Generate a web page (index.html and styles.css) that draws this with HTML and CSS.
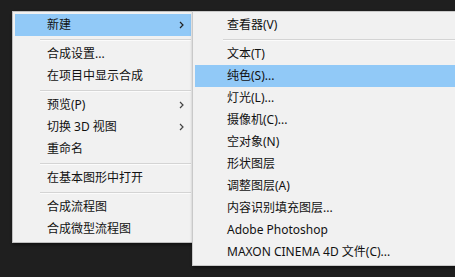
FILE: index.html
```html
<!DOCTYPE html>
<html lang="zh-CN">
<head>
<meta charset="utf-8">
<link rel="stylesheet" href="styles.css">
</head>
<body>
<div class="stage">
  <div class="menu menu-main">
    <div class="item active"><span class="label">新建</span><svg class="chev" width="5" height="8" viewBox="0 0 5 8"><path d="M1 1 L4 4 L1 7" fill="none" stroke="#222" stroke-width="1.2"/></svg></div>
    <div class="sep"></div>
    <div class="item"><span class="label">合成设置...</span></div>
    <div class="item"><span class="label">在项目中显示合成</span></div>
    <div class="sep"></div>
    <div class="item"><span class="label">预览(P)</span><svg class="chev" width="5" height="8" viewBox="0 0 5 8"><path d="M1 1 L4 4 L1 7" fill="none" stroke="#444" stroke-width="1.2"/></svg></div>
    <div class="item"><span class="label">切换 3D 视图</span><svg class="chev" width="5" height="8" viewBox="0 0 5 8"><path d="M1 1 L4 4 L1 7" fill="none" stroke="#444" stroke-width="1.2"/></svg></div>
    <div class="item"><span class="label">重命名</span></div>
    <div class="sep"></div>
    <div class="item"><span class="label">在基本图形中打开</span></div>
    <div class="sep"></div>
    <div class="item"><span class="label">合成流程图</span></div>
    <div class="item"><span class="label">合成微型流程图</span></div>
  </div>
  <div class="menu menu-sub">
    <div class="item"><span class="label">查看器(V)</span></div>
    <div class="sep"></div>
    <div class="item"><span class="label">文本(T)</span></div>
    <div class="item active"><span class="label">纯色(S)...</span></div>
    <div class="item"><span class="label">灯光(L)...</span></div>
    <div class="item"><span class="label">摄像机(C)...</span></div>
    <div class="item"><span class="label">空对象(N)</span></div>
    <div class="item"><span class="label">形状图层</span></div>
    <div class="item"><span class="label">调整图层(A)</span></div>
    <div class="item"><span class="label">内容识别填充图层...</span></div>
    <div class="item"><span class="label">Adobe Photoshop</span></div>
    <div class="item"><span class="label">MAXON CINEMA 4D 文件(C)...</span></div>
  </div>
</div>
</body>
</html>
```

FILE: styles.css
```css
html, body {
  margin: 0;
  padding: 0;
  background: #1f1f1f;
  overflow: hidden;
}
.stage {
  position: relative;
  width: 455px;
  height: 277px;
  background: #1f1f1f;
  font-family: "Noto Sans", "Noto Sans CJK SC", sans-serif;
  font-size: 12px;
  color: #111;
}
.menu {
  position: absolute;
  top: 11px;
  background: #f1f1f1;
  border: 1px solid #bfbfbf;
  padding: 2px;
  display: flex;
  flex-direction: column;
  box-shadow: 1px 2px 3px rgba(0,0,0,0.45);
}
.menu-main {
  left: 12px;
  width: 176px;
}
.menu-sub {
  left: 192px;
  width: 260px;
  border-color: #c9c9c9;
}
.item {
  height: 22px;
  display: flex;
  align-items: center;
  padding-left: 32px;
  padding-right: 5px;
  line-height: 22px;
}
.item .label {
  flex: 1;
  white-space: nowrap;
}
.item.active {
  background: #91c9f7;
}
.chev {
  display: block;
  margin-right: 2px;
}
.sep {
  height: 0;
  margin: 3px 0 2px 25px;
  border-top: 1px solid #d4d4d4;
  border-bottom: 1px solid #fbfbfb;
}
.menu-sub .sep {
  margin-left: 28px;
}
```
